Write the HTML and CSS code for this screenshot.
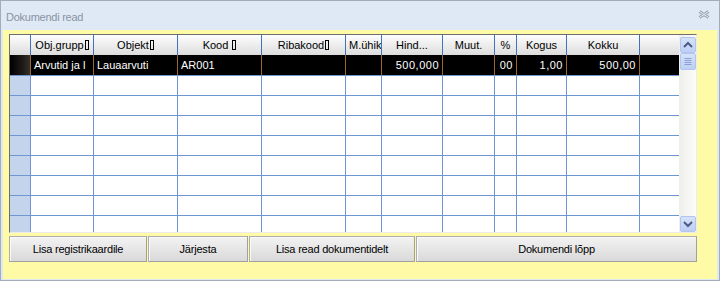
FILE: index.html
```html
<!DOCTYPE html>
<html>
<head>
<meta charset="utf-8">
<link rel="stylesheet" href="styles.css">
</head>
<body>
<div class="window">
  <div class="titlebar">
    <span class="title">Dokumendi read</span>
    <svg class="close" width="12" height="9" viewBox="0 0 12 9">
      <path d="M1.5 1.5 L10.5 7.5 M1.5 7.5 L10.5 1.5" stroke="#9aa4b2" stroke-width="3" fill="none"/>
      <path d="M1.5 1.5 L10.5 7.5 M1.5 7.5 L10.5 1.5" stroke="#e9eff8" stroke-width="1" fill="none"/>
    </svg>
  </div>
  <div class="panel">
    <div class="grid">
      <div class="rows">
        <div class="row head">
          <div class="rh"></div>
          <div>Obj.grupp<span class="bx"></span></div>
          <div>Objekt<span class="bx"></span></div>
          <div>Kood <span class="bx"></span></div>
          <div>Ribakood<span class="bx"></span></div>
          <div class="left">M.ühik</div>
          <div>Hind...</div>
          <div>Muut.</div>
          <div>%</div>
          <div>Kogus</div>
          <div>Kokku</div>
          <div></div>
        </div>
        <div class="row sel">
          <div class="rh"></div>
          <div>Arvutid ja l</div>
          <div>Lauaarvuti</div>
          <div>AR001</div>
          <div></div>
          <div></div>
          <div class="num">500,000</div>
          <div></div>
          <div class="num">00</div>
          <div class="num">1,00</div>
          <div class="num">500,00</div>
          <div></div>
        </div>
        <div class="row body"><div class="rh"></div><div></div><div></div><div></div><div></div><div></div><div></div><div></div><div></div><div></div><div></div><div></div></div>
        <div class="row body"><div class="rh"></div><div></div><div></div><div></div><div></div><div></div><div></div><div></div><div></div><div></div><div></div><div></div></div>
        <div class="row body"><div class="rh"></div><div></div><div></div><div></div><div></div><div></div><div></div><div></div><div></div><div></div><div></div><div></div></div>
        <div class="row body"><div class="rh"></div><div></div><div></div><div></div><div></div><div></div><div></div><div></div><div></div><div></div><div></div><div></div></div>
        <div class="row body"><div class="rh"></div><div></div><div></div><div></div><div></div><div></div><div></div><div></div><div></div><div></div><div></div><div></div></div>
        <div class="row body"><div class="rh"></div><div></div><div></div><div></div><div></div><div></div><div></div><div></div><div></div><div></div><div></div><div></div></div>
        <div class="row body"><div class="rh"></div><div></div><div></div><div></div><div></div><div></div><div></div><div></div><div></div><div></div><div></div><div></div></div>
        <div class="row body"><div class="rh"></div><div></div><div></div><div></div><div></div><div></div><div></div><div></div><div></div><div></div><div></div><div></div></div>
      </div>
      <div class="vscroll">
        <div class="sbtn">
          <svg width="14" height="14" viewBox="0 0 14 14"><polyline points="3,9 7,5 11,9" stroke="#4b5c84" stroke-width="2" fill="none"/></svg>
        </div>
        <div class="thumb">
          <svg width="14" height="15" viewBox="0 0 14 15"><path d="M3.5 4.5 H10.5 M3.5 6.5 H10.5 M3.5 8.5 H10.5 M3.5 10.5 H10.5" stroke="#8aa0d2" stroke-width="1"/></svg>
        </div>
        <div class="sbtn down">
          <svg width="14" height="14" viewBox="0 0 14 14"><polyline points="3,5 7,9 11,5" stroke="#4b5c84" stroke-width="2" fill="none"/></svg>
        </div>
      </div>
    </div>
    <div class="buttons">
      <div class="btn b1">Lisa registrikaardile</div>
      <div class="btn b2">Järjesta</div>
      <div class="btn b3">Lisa read dokumentidelt</div>
      <div class="btn b4">Dokumendi lõpp</div>
    </div>
  </div>
</div>
</body>
</html>
```
FILE: styles.css
```css
* { box-sizing: border-box; }
body {
  margin: 0;
  font-family: "Liberation Sans", Arial, sans-serif;
  font-size: 11px;
  color: #000;
}
.window {
  width: 720px;
  height: 281px;
  border: 1px solid #a3adba;
  background: #dfe9f5;
  display: flex;
  flex-direction: column;
}
.titlebar {
  height: 29px;
  flex: none;
  display: flex;
  justify-content: space-between;
  align-items: flex-start;
  padding: 3px 9px 0 5px;
}
.title {
  line-height: 26px;
  color: #8993a2;
  letter-spacing: -0.25px;
}
.close { margin-top: 6px; }
.panel {
  flex: 1;
  margin: 0 2px 1px 2px;
  background: #fffaa6;
  padding: 4px 20px 0 6px;
  display: flex;
  flex-direction: column;
  gap: 3px;
}
.grid {
  height: 199px;
  flex: none;
  border: 1px solid;
  border-color: #6e6e6e #ececec #ececec #6e6e6e;
  background: #fff;
  display: flex;
}
.rows {
  width: 669px;
  overflow: hidden;
}
.row {
  display: grid;
  grid-template-columns: 21px 63px 84px 84px 84px 36px 61px 52px 22px 50px 73px 39px;
  height: 20px;
}
.row > div {
  border-right: 1px solid #6d96d2;
  overflow: hidden;
  white-space: nowrap;
  padding: 0 3px;
  line-height: 20px;
}
.row > div:last-child { border-right: none; }
.head > div {
  background: linear-gradient(#fdfdfd, #dddddd);
  border-right-color: #3f72c2;
  text-align: center;
}
.head > .left { text-align: left; }
.bx {
  display: inline-block;
  width: 4px;
  height: 10px;
  border: 1px solid #000;
  margin-left: 1px;
  vertical-align: -1px;
}
.sel { background: #000; color: #fff; }
.sel > div { border-right-color: #9a672e; }
.sel > .rh { background: linear-gradient(90deg, #000 0%, #1c1915 60%, #35302a 100%); }
.body { border-top: 1px solid #6d96d2; }
.body > div { line-height: 19px; }
.body > .rh { background: #c4d4ec; }
.num {
  text-align: right;
  letter-spacing: 0.5px;
}
.vscroll {
  width: 17px;
  background: linear-gradient(90deg, #eeeeea, #fcfcfb);
  display: flex;
  flex-direction: column;
  padding: 2px 0 0 1px;
}
.sbtn, .thumb {
  width: 16px;
  height: 16px;
  border: 1px solid #b3c5ee;
  border-radius: 2px;
  background: linear-gradient(#d6e2fb, #bdcff5);
  display: flex;
  align-items: center;
  justify-content: center;
}
.thumb { height: 17px; }
.down { margin-top: auto; }
.buttons {
  display: flex;
  gap: 1px;
  height: 26px;
  flex: none;
}
.btn {
  height: 26px;
  border: 1px solid #adadad;
  border-right-color: #a0a0a0;
  border-bottom-color: #a0a0a0;
  background: linear-gradient(#f3f3f3, #d9d9d9);
  box-shadow: inset 1px 1px 0 #fafafa;
  text-align: center;
  line-height: 24px;
  letter-spacing: -0.2px;
}
.b1 { width: 138px; }
.b2 { width: 100px; }
.b3 { width: 166px; }
.b4 { width: 281px; }
```
